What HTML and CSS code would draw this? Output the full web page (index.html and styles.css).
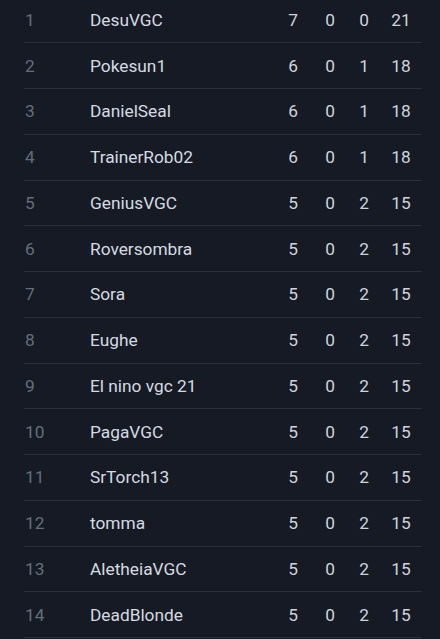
FILE: index.html
```html
<!DOCTYPE html>
<html>
<head>
<meta charset="utf-8">
<link rel="stylesheet" href="styles.css">
</head>
<body>
<div class="standings">
  <div class="row"><span class="rank">1</span><span class="name">DesuVGC</span><span class="stat">7</span><span class="stat">0</span><span class="stat">0</span><span class="stat">21</span></div>
  <div class="row"><span class="rank">2</span><span class="name">Pokesun1</span><span class="stat">6</span><span class="stat">0</span><span class="stat">1</span><span class="stat">18</span></div>
  <div class="row"><span class="rank">3</span><span class="name">DanielSeal</span><span class="stat">6</span><span class="stat">0</span><span class="stat">1</span><span class="stat">18</span></div>
  <div class="row"><span class="rank">4</span><span class="name">TrainerRob02</span><span class="stat">6</span><span class="stat">0</span><span class="stat">1</span><span class="stat">18</span></div>
  <div class="row"><span class="rank">5</span><span class="name">GeniusVGC</span><span class="stat">5</span><span class="stat">0</span><span class="stat">2</span><span class="stat">15</span></div>
  <div class="row"><span class="rank">6</span><span class="name">Roversombra</span><span class="stat">5</span><span class="stat">0</span><span class="stat">2</span><span class="stat">15</span></div>
  <div class="row"><span class="rank">7</span><span class="name">Sora</span><span class="stat">5</span><span class="stat">0</span><span class="stat">2</span><span class="stat">15</span></div>
  <div class="row"><span class="rank">8</span><span class="name">Eughe</span><span class="stat">5</span><span class="stat">0</span><span class="stat">2</span><span class="stat">15</span></div>
  <div class="row"><span class="rank">9</span><span class="name">El nino vgc 21</span><span class="stat">5</span><span class="stat">0</span><span class="stat">2</span><span class="stat">15</span></div>
  <div class="row"><span class="rank">10</span><span class="name">PagaVGC</span><span class="stat">5</span><span class="stat">0</span><span class="stat">2</span><span class="stat">15</span></div>
  <div class="row"><span class="rank">11</span><span class="name">SrTorch13</span><span class="stat">5</span><span class="stat">0</span><span class="stat">2</span><span class="stat">15</span></div>
  <div class="row"><span class="rank">12</span><span class="name">tomma</span><span class="stat">5</span><span class="stat">0</span><span class="stat">2</span><span class="stat">15</span></div>
  <div class="row"><span class="rank">13</span><span class="name">AletheiaVGC</span><span class="stat">5</span><span class="stat">0</span><span class="stat">2</span><span class="stat">15</span></div>
  <div class="row"><span class="rank">14</span><span class="name">DeadBlonde</span><span class="stat">5</span><span class="stat">0</span><span class="stat">2</span><span class="stat">15</span></div>
</div>
</body>
</html>
```
FILE: styles.css
```css
html, body {
  margin: 0;
  padding: 0;
  background: #151a25;
  overflow: hidden;
}
body {
  font-family: Roboto, "Liberation Sans", sans-serif;
  font-size: 17.3px;
}
.standings {
  width: 397px;
  margin: -2.4px 0 0 24px;
}
.row {
  display: grid;
  grid-template-columns: 66px 1fr 40px 34px 34px 40px;
  align-items: center;
  height: 44.75px;
  border-bottom: 1px solid #2a303b;
}
.rank {
  color: #666d79;
  padding-left: 1px;
}
.name {
  color: #d6dae0;
}
.stat {
  color: #d0d4da;
  text-align: center;
}
```
